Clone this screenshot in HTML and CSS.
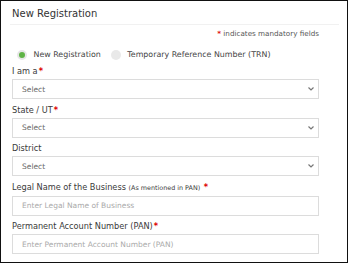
FILE: index.html
```html
<!DOCTYPE html>
<html>
  <head>
    <link rel="stylesheet" href="styles.css">
  </head>
  <body>
    <div class="frame">
      <h2 class="title">New Registration</h2>
      <p class="mandatory"><span class="req">*</span> indicates mandatory fields</p>
      <div class="radios">
        <label class="radio"><span class="dot dot-on"></span>New Registration</label>
        <label class="radio"><span class="dot"></span>Temporary Reference Number (TRN)</label>
      </div>

      <div class="field">
        <label class="label">I am a<span class="req">*</span></label>
        <div class="control select">
          <span>Select</span>
          <svg class="chevron" width="6" height="4" viewBox="0 0 6 4"><polyline points="0.5,0.5 3,3 5.5,0.5" fill="none" stroke="#777" stroke-width="1.2"/></svg>
        </div>
      </div>

      <div class="field">
        <label class="label">State / UT<span class="req">*</span></label>
        <div class="control select">
          <span>Select</span>
          <svg class="chevron" width="6" height="4" viewBox="0 0 6 4"><polyline points="0.5,0.5 3,3 5.5,0.5" fill="none" stroke="#777" stroke-width="1.2"/></svg>
        </div>
      </div>

      <div class="field">
        <label class="label">District</label>
        <div class="control select">
          <span>Select</span>
          <svg class="chevron" width="6" height="4" viewBox="0 0 6 4"><polyline points="0.5,0.5 3,3 5.5,0.5" fill="none" stroke="#777" stroke-width="1.2"/></svg>
        </div>
      </div>

      <div class="field">
        <label class="label">Legal Name of the Business <small class="hint">(As mentioned in PAN)</small> <span class="req">*</span></label>
        <div class="control input">Enter Legal Name of Business</div>
      </div>

      <div class="field">
        <label class="label">Permanent Account Number (PAN)<span class="req">*</span></label>
        <div class="control input">Enter Permanent Account Number (PAN)</div>
      </div>
    </div>
  </body>
</html>
```

FILE: styles.css
```css
body {
  margin: 0;
  padding: 0;
  background-color: #fff;
  font-family: "DejaVu Sans", Verdana, sans-serif;
  color: #333;
}
.frame {
  box-sizing: border-box;
  width: 348px;
  height: 263px;
  border: 1px solid #111;
  padding: 0 28px 0 11px;
  overflow: hidden;
}
.title {
  margin: 5px -20px 0 -2px;
  padding: 0 0 2px 2px;
  font-size: 10px;
  line-height: 16px;
  font-weight: normal;
  color: #333;
  border-bottom: 1px solid #f1f1f1;
}
.mandatory {
  margin: 4px 0 0 0;
  text-align: right;
  font-size: 7.2px;
  line-height: 10px;
  color: #555;
}
.req {
  color: #d00;
  font-weight: bold;
  margin-left: 1px;
}
.radios {
  display: flex;
  align-items: center;
  gap: 10px;
  margin: 9.5px 0 5px 0;
  padding-left: 5px;
  height: 12px;
}
.radio {
  display: flex;
  align-items: center;
  gap: 6.5px;
  font-size: 7.9px;
  color: #444;
}
.dot {
  box-sizing: border-box;
  width: 10px;
  height: 10px;
  border-radius: 50%;
  background-color: #e9e9e9;
}
.dot-on {
  background-color: #5fb346;
  border: 2px solid #e6e6e6;
}
.field {
  margin-top: 5.5px;
}
.label {
  display: block;
  font-size: 8.2px;
  line-height: 10px;
  color: #3a3a3a;
  margin-bottom: 3px;
}
.hint {
  font-size: 6.4px;
}
.control {
  box-sizing: border-box;
  height: 20px;
  border: 1px solid #dcdcdc;
  padding: 0 9px;
  display: flex;
  align-items: center;
  font-size: 7.5px;
  color: #666;
}
.select {
  justify-content: space-between;
  padding-right: 4px;
}
.input {
  color: #aaa;
}
```
